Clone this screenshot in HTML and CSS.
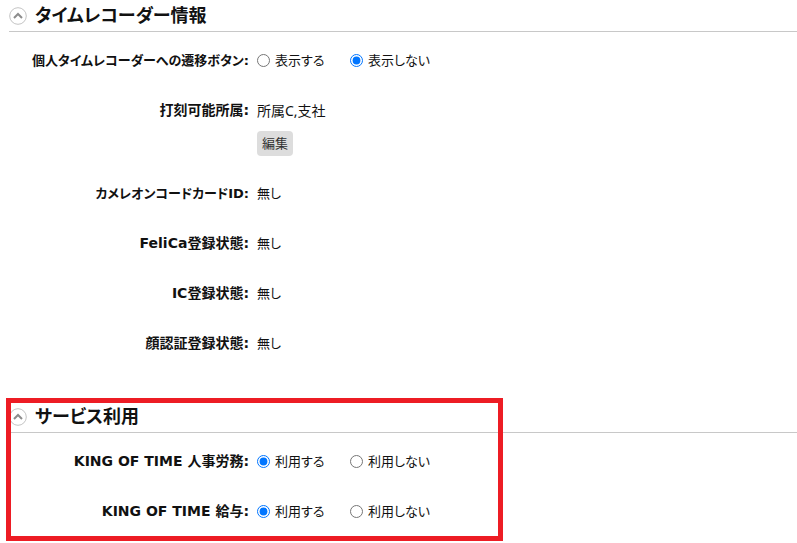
FILE: index.html
```
<!DOCTYPE html>
<html lang="ja">
<head>
    <meta charset="UTF-8">
    <meta name="viewport" content="width=device-width, initial-scale=1.0">
    <title>タイムレコーダー情報</title>
    <link rel="stylesheet" href="styles.css">
</head>
<body>
    <section class="section">
        <div class="section-head">
            <button type="button" class="toggle" aria-label="タイムレコーダー情報を閉じる">
                <svg width="18" height="18" viewBox="0 0 18 18"><circle cx="9" cy="9" r="8.3"/><path d="M5 11l4-4 4 4"/></svg>
            </button>
            <h2>タイムレコーダー情報</h2>
        </div>
        <div class="rows">
            <div class="row" role="radiogroup" aria-labelledby="transition">
                <div class="name kana" id="transition">個人タイムレコーダーへの遷移ボタン:</div>
                <div class="value choices">
                    <label><input type="radio" name="transition">表示する</label>
                    <label><input type="radio" name="transition" checked>表示しない</label>
                </div>
            </div>
            <div class="row">
                <div class="name">打刻可能所属:</div>
                <div class="value">
                    <div>所属C,支社</div>
                    <button type="button" class="edit">編集</button>
                </div>
            </div>
            <div class="row">
                <div class="name kana">カメレオンコードカードID:</div>
                <div class="value kana">無し</div>
            </div>
            <div class="row">
                <div class="name">FeliCa登録状態:</div>
                <div class="value kana">無し</div>
            </div>
            <div class="row">
                <div class="name">IC登録状態:</div>
                <div class="value kana">無し</div>
            </div>
            <div class="row">
                <div class="name">顔認証登録状態:</div>
                <div class="value kana">無し</div>
            </div>
        </div>
    </section>

    <section class="section">
        <div class="section-head">
            <button type="button" class="toggle" aria-label="サービス利用を閉じる">
                <svg width="18" height="18" viewBox="0 0 18 18"><circle cx="9" cy="9" r="8.3"/><path d="M5 11l4-4 4 4"/></svg>
            </button>
            <h2>サービス利用</h2>
        </div>
        <div class="rows">
            <div class="row" role="radiogroup" aria-labelledby="jinji">
                <div class="name" id="jinji">KING OF TIME 人事労務:</div>
                <div class="value choices">
                    <label><input type="radio" name="jinji" checked>利用する</label>
                    <label><input type="radio" name="jinji">利用しない</label>
                </div>
            </div>
            <div class="row" role="radiogroup" aria-labelledby="kyuyo">
                <div class="name" id="kyuyo">KING OF TIME 給与:</div>
                <div class="value choices">
                    <label><input type="radio" name="kyuyo" checked>利用する</label>
                    <label><input type="radio" name="kyuyo">利用しない</label>
                </div>
            </div>
        </div>
        <div class="highlight"></div>
    </section>
</body>
</html>
```
FILE: styles.css
```
*{
    margin: 0;
    padding: 0;
    box-sizing: border-box;
}

body{
    background-color: white;
    color: #111;
    font-family: "Noto Sans", "Noto Sans CJK JP", sans-serif;
    font-size: 14px;
    line-height: 25px;
    font-feature-settings: "palt";
    padding-bottom: 19px;
}

.section{
    position: relative;
    margin-left: 9px;
}

.section + .section{
    margin-top: 45px;
}

.section-head{
    display: flex;
    align-items: center;
    gap: 8px;
    height: 32px;
    border-bottom: 1px solid #c8c8c8;
}

h2{
    font-size: 18px;
    font-weight: 700;
}

.toggle{
    width: 18px;
    height: 18px;
    border: none;
    background: none;
    cursor: pointer;
}

.toggle svg{
    display: block;
    fill: none;
    stroke: #c4c4c4;
}

.toggle path{
    stroke: #8c8c8c;
    stroke-width: 2;
}

.rows{
    display: flex;
    flex-direction: column;
    gap: 25px;
    padding-top: 16px;
}

.row{
    display: grid;
    grid-template-columns: 240px 1fr;
    column-gap: 8px;
}

.name{
    font-family: "DejaVu Sans", "Noto Sans CJK JP", sans-serif;
    font-weight: 700;
    text-align: right;
    white-space: nowrap;
}

.kana,
.choices{
    font-size: 13px;
}

.choices{
    display: flex;
}

.choices label{
    display: flex;
    align-items: center;
    width: 93px;
    white-space: nowrap;
}

.choices input{
    width: 13px;
    height: 13px;
    margin-right: 5px;
}

.edit{
    display: block;
    height: 25px;
    margin-top: 8px;
    padding: 0 5px;
    border: none;
    border-radius: 4px;
    background-color: #ddd;
    color: #333;
    font: inherit;
    font-size: 13px;
    cursor: pointer;
}

.highlight{
    position: absolute;
    top: -3px;
    left: -3px;
    width: 497px;
    height: 143px;
    border: 5px solid #ed1c24;
    pointer-events: none;
}
```
